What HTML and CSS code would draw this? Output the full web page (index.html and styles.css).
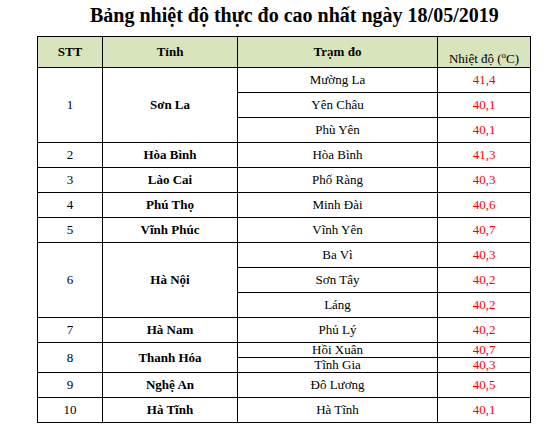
FILE: index.html
```html
<!DOCTYPE html>
<html lang="vi">
<head>
<meta charset="utf-8">
<link rel="stylesheet" href="styles.css">
</head>
<body>
<h1 class="title">Bảng nhiệt độ thực đo cao nhất ngày 18/05/2019</h1>
<table class="temp">
<colgroup><col class="c1"><col class="c2"><col class="c3"><col class="c4"></colgroup>
<thead>
<tr class="head"><th>STT</th><th>Tỉnh</th><th>Trạm đo</th><th class="unit">Nhiệt độ (<sup>o</sup>C)</th></tr>
</thead>
<tbody>
<tr><td rowspan="3">1</td><td rowspan="3" class="prov">Sơn La</td><td>Mường La</td><td class="val">41,4</td></tr>
<tr><td>Yên Châu</td><td class="val">40,1</td></tr>
<tr><td>Phù Yên</td><td class="val">40,1</td></tr>
<tr><td>2</td><td class="prov">Hòa Bình</td><td>Hòa Bình</td><td class="val">41,3</td></tr>
<tr><td>3</td><td class="prov">Lào Cai</td><td>Phố Ràng</td><td class="val">40,3</td></tr>
<tr><td>4</td><td class="prov">Phú Thọ</td><td>Minh Đài</td><td class="val">40,6</td></tr>
<tr><td>5</td><td class="prov">Vĩnh Phúc</td><td>Vĩnh Yên</td><td class="val">40,7</td></tr>
<tr><td rowspan="3">6</td><td rowspan="3" class="prov">Hà Nội</td><td>Ba Vì</td><td class="val">40,3</td></tr>
<tr><td>Sơn Tây</td><td class="val">40,2</td></tr>
<tr><td>Láng</td><td class="val">40,2</td></tr>
<tr><td>7</td><td class="prov">Hà Nam</td><td>Phủ Lý</td><td class="val">40,2</td></tr>
<tr class="thin"><td rowspan="2">8</td><td rowspan="2" class="prov">Thanh Hóa</td><td>Hồi Xuân</td><td class="val">40,7</td></tr>
<tr class="thin2"><td>Tĩnh Gia</td><td class="val">40,3</td></tr>
<tr><td>9</td><td class="prov">Nghệ An</td><td>Đô Lương</td><td class="val">40,5</td></tr>
<tr><td>10</td><td class="prov">Hà Tĩnh</td><td>Hà Tĩnh</td><td class="val">40,1</td></tr>
</tbody>
</table>
</body>
</html>
```
FILE: styles.css
```css
html, body {
  margin: 0;
  padding: 0;
  background: #ffffff;
}
body {
  font-family: "Liberation Serif", "Times New Roman", serif;
  color: #000000;
}
.title {
  margin: 0;
  padding: 4px 0 0 90px;
  height: 36px;
  box-sizing: border-box;
  font-size: 20px;
  line-height: 22px;
  font-weight: bold;
  white-space: nowrap;
}
.temp {
  margin-left: 37px;
  border-collapse: collapse;
  table-layout: fixed;
  width: 493px;
  font-size: 13px;
}
.c1 { width: 65px; }
.c2 { width: 135px; }
.c3 { width: 200px; }
.c4 { width: 93px; }
.temp th, .temp td {
  border: 1px solid #000000;
  padding: 0;
  text-align: center;
  vertical-align: middle;
  line-height: 14px;
}
.head th {
  background: #d8e4bc;
  height: 29px;
  font-weight: bold;
}
.head th.unit {
  font-weight: normal;
  vertical-align: bottom;
  padding-bottom: 1px;
}
.unit sup {
  font-size: 9px;
  line-height: 0;
  vertical-align: 5px;
}
.temp tbody tr { height: 25px; }
.temp tbody tr.thin { height: 14px; }
.temp tbody tr.thin2 { height: 15px; }
.prov { font-weight: bold; }
.val { color: #ff0000; }
```
